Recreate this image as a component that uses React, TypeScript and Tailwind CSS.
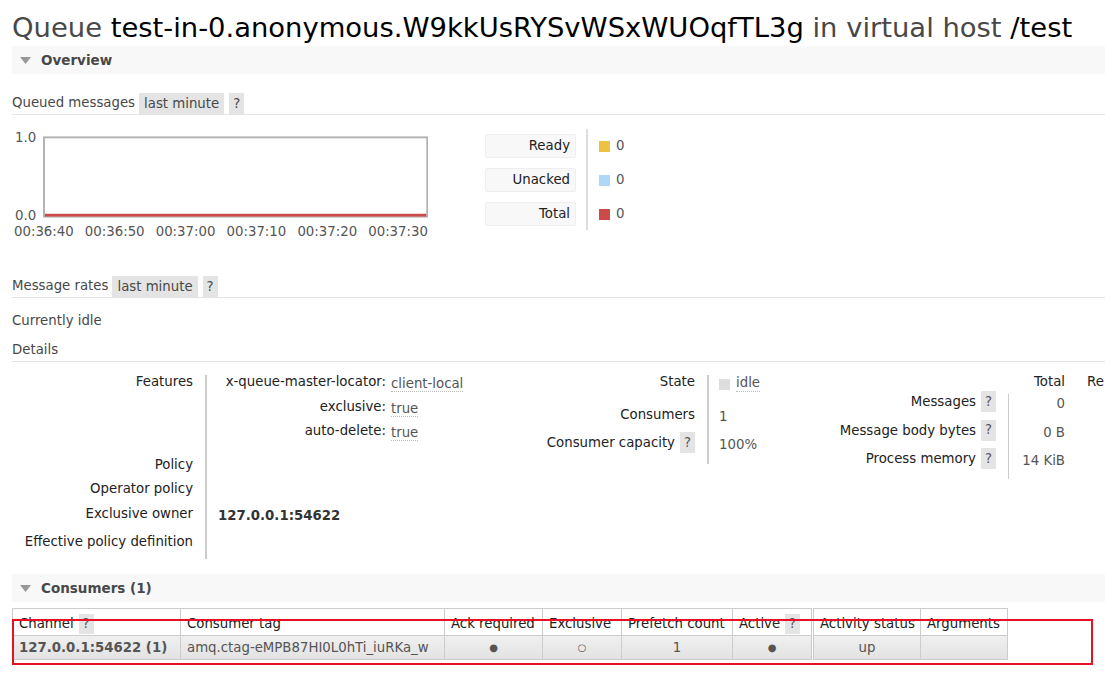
import React from "react";

const FONT = { fontFamily: '"DejaVu Sans", Verdana, sans-serif' };

function Help({ h = "h-[21px]" }: { h?: string }) {
  return (
    <span className={`inline-flex ${h} w-[15px] items-center justify-center bg-[#e4e4e4] text-[#555]`}>
      ?
    </span>
  );
}

function SectionBar({ title }: { title: string }) {
  return (
    <div className="flex h-[28px] items-center bg-[#f8f8f8] pl-[8px]">
      <svg width="11" height="7" viewBox="0 0 11 7" className="mr-[10px]">
        <polygon points="0,0 11,0 5.5,7" fill="#999" />
      </svg>
      <span className="text-[13.5px] font-bold text-[#484848]">{title}</span>
    </div>
  );
}

function SubHead({ label, badge }: { label: string; badge?: boolean }) {
  return (
    <div className="flex h-[22px] items-end border-b border-[#e4e4e4] text-[#484848]">
      <span className="mr-[4px] leading-[22px]">{label}</span>
      {badge && (
        <>
          <span className="mr-[5px] bg-[#e4e4e4] px-[5px] leading-[21px]">last minute</span>
          <span className="bg-[#e4e4e4] px-[4px] leading-[21px]">?</span>
        </>
      )}
    </div>
  );
}

function Chart() {
  const times = ["00:36:40", "00:36:50", "00:37:00", "00:37:10", "00:37:20", "00:37:30"];
  return (
    <div className="flex w-[416px] flex-col text-[#555]">
      <div className="flex">
        <div className="flex h-[94px] w-[31px] flex-col justify-between pl-[3px] leading-[16px]">
          <span>1.0</span>
          <span>0.0</span>
        </div>
        <svg width="389" height="82" viewBox="0 0 389 82" className="mt-[6px]">
          <rect x="1" y="1" width="387" height="80" fill="#fff" stroke="#b3b3b3" strokeWidth="2" />
          <line x1="2" y1="79.5" x2="387" y2="79.5" stroke="#cb4b4b" strokeWidth="3" />
        </svg>
      </div>
      <div className="flex justify-between pl-[2px] leading-[16px]">
        {times.map((t) => (
          <span key={t}>{t}</span>
        ))}
      </div>
    </div>
  );
}

function Legend() {
  const items = [
    { label: "Ready", color: "bg-[#edc240]" },
    { label: "Unacked", color: "bg-[#afd8f8]" },
    { label: "Total", color: "bg-[#cb4b4b]" },
  ];
  return (
    <div className="flex">
      <div className="flex flex-col gap-[10px] pt-[5px] pr-[10px]">
        {items.map((i) => (
          <div
            key={i.label}
            className="h-[24px] w-[91px] rounded-[2px] border border-[#eee] bg-[#f8f8f8] pr-[5px] text-right leading-[22px] text-[#222]"
          >
            {i.label}
          </div>
        ))}
      </div>
      <div className="flex h-[101px] flex-col gap-[10px] border-l-[2px] border-[#ddd] pt-[5px] pl-[11px]">
        {items.map((i) => (
          <div key={i.label} className="flex h-[24px] items-center gap-[6px] text-[#555]">
            <span className={`h-[11px] w-[11px] ${i.color}`} />
            <span>0</span>
          </div>
        ))}
      </div>
    </div>
  );
}

function DottedVal({ children }: { children: React.ReactNode }) {
  return (
    <span className="whitespace-nowrap border-b border-dotted border-[#bbb] leading-[17px] text-[#555]">
      {children}
    </span>
  );
}

function VLine({ h }: { h: string }) {
  return <div className={`mt-[3px] w-[2px] shrink-0 bg-[#ccc] ${h}`} />;
}

function DetailsLeft() {
  const labels: { label: string; h: string }[] = [
    { label: "Features", h: "h-[83px]" },
    { label: "Policy", h: "h-[24px]" },
    { label: "Operator policy", h: "h-[25px]" },
    { label: "Exclusive owner", h: "h-[28px]" },
    { label: "Effective policy definition", h: "h-[20px]" },
  ];
  return (
    <div className="flex w-[458px] leading-[20px]">
      <div className="flex w-[193px] shrink-0 flex-col pr-[12px] text-right text-[#222] whitespace-nowrap">
        {labels.map((l) => (
          <div key={l.label} className={l.h}>
            {l.label}
          </div>
        ))}
      </div>
      <VLine h="h-[184px]" />
      <div className="flex flex-col pl-[11px]">
        <div className="h-[83px]">
          {[
            ["x-queue-master-locator:", "client-local"],
            ["exclusive:", "true"],
            ["auto-delete:", "true"],
          ].map(([k, v]) => (
            <div key={k} className="flex h-[24.5px]">
              <span className="w-[173px] shrink-0 pr-[5px] text-right text-[#222] whitespace-nowrap">{k}</span>
              <span className="pt-[2px]">
                <DottedVal>{v}</DottedVal>
              </span>
            </div>
          ))}
        </div>
        <div className="h-[24px]" />
        <div className="h-[25px]" />
        <div className="h-[28px] pt-[2px] font-bold text-[#333]">127.0.0.1:54622</div>
      </div>
    </div>
  );
}

function DetailsMiddle() {
  return (
    <div className="flex w-[310px] leading-[20px]">
      <div className="flex w-[237px] shrink-0 flex-col items-end pr-[12px] text-[#222]">
        <div className="h-[33px]">State</div>
        <div className="h-[28px]">Consumers</div>
        <div className="flex h-[28px] items-start gap-[5px]">
          <span>Consumer capacity</span>
          <span className="-mt-[1px]">
            <Help />
          </span>
        </div>
      </div>
      <VLine h="h-[89px]" />
      <div className="flex flex-col pl-[10px] pt-[2px] text-[#555]">
        <div className="flex h-[33px] items-start gap-[6px]">
          <span className="mt-[5px] h-[11px] w-[11px] bg-[#ddd]" />
          <DottedVal>idle</DottedVal>
        </div>
        <div className="h-[28px]">1</div>
        <div className="h-[28px]">100%</div>
      </div>
    </div>
  );
}

function DetailsRight() {
  const rows = [
    ["Messages", "0"],
    ["Message body bytes", "0 B"],
    ["Process memory", "14 KiB"],
  ];
  return (
    <div className="flex flex-col leading-[20px]">
      <div className="flex h-[20px]">
        <span className="w-[285px] text-right text-[#222]">Total</span>
        <span className="pl-[22px] text-[#222]">Re</span>
      </div>
      <div className="flex">
        <div className="flex w-[228px] shrink-0 flex-col items-end pr-[12px] text-[#222]">
          {rows.map(([l]) => (
            <div key={l} className="flex h-[28.5px] items-start gap-[5px]">
              <span>{l}</span>
              <span className="-mt-[1px]">
                <Help />
              </span>
            </div>
          ))}
        </div>
        <div className="mt-[2px] h-[85px] w-[1px] bg-[#ccc]" />
        <div className="flex w-[56px] flex-col items-end pt-[2px] text-[#555]">
          {rows.map(([l, v]) => (
            <div key={l} className="h-[28.5px] whitespace-nowrap">
              {v}
            </div>
          ))}
        </div>
      </div>
    </div>
  );
}

function ConsumersTable() {
  const cols = [
    { h: "Channel", w: "w-[168px]", help: true },
    { h: "Consumer tag", w: "w-[264px]" },
    { h: "Ack required", w: "w-[98px]" },
    { h: "Exclusive", w: "w-[79px]" },
    { h: "Prefetch count", w: "w-[111px]" },
    { h: "Active", w: "w-[80px]", help: true },
    { h: "Activity status", w: "w-[108px]" },
    { h: "Arguments", w: "w-[87px]" },
  ];
  const vals = ["127.0.0.1:54622 (1)", "amq.ctag-eMPB87HI0L0hTi_iuRKa_w", "●", "○", "1", "●", "up", ""];
  return (
    <table className="w-[995px] table-fixed border-collapse">
      <thead>
        <tr>
          {cols.map((c, i) => (
            <th
              key={c.h}
              className={`${c.w} h-[27px] border border-[#ccc] px-[6px] pt-[3px] pb-0 text-left align-middle font-normal whitespace-nowrap text-[#222] ${i === 6 ? "border-l-[3px] [border-left-style:double]" : ""}`}
            >
              {c.help ? (
                <span className="flex items-center gap-[5px]">
                  <span>{c.h}</span>
                  <Help h="h-[20px]" />
                </span>
              ) : (
                c.h
              )}
            </th>
          ))}
        </tr>
      </thead>
      <tbody>
        <tr className="bg-gradient-to-b from-[#f0f0f0] to-[#e2e2e2]">
          {vals.map((v, i) => (
            <td
              key={i}
              className={`h-[24px] overflow-hidden border border-[#ccc] px-[6px] whitespace-nowrap text-[#555] ${i < 2 ? "text-left" : "text-center"} ${i === 0 ? "font-bold text-[#222]" : ""} ${i === 6 ? "border-l-[3px] [border-left-style:double]" : ""} ${v === "●" || v === "○" ? "text-[10px]" : ""}`}
            >
              {v}
            </td>
          ))}
        </tr>
      </tbody>
    </table>
  );
}

export default function App() {
  return (
    <div
      className="relative h-[673px] w-[1105px] overflow-hidden bg-white pl-[12px] text-[13.3px]"
      style={FONT}
    >
      <h1 className="h-[45px] pt-[13px] text-[27.4px] leading-[30px] font-normal whitespace-nowrap text-[#484848]">
        Queue <span className="text-black">test-in-0.anonymous.W9kkUsRYSvWSxWUOqfTL3g</span> in virtual host{" "}
        <span className="text-black">/test</span>
      </h1>
      <div className="mt-[1px]">
        <SectionBar title="Overview" />
      </div>

      <div className="mt-[19px]">
        <SubHead label="Queued messages" badge />
      </div>

      <div className="mt-[15px] flex h-[110px]">
        <Chart />
        <div className="ml-[57px] -mt-[1px]">
          <Legend />
        </div>
      </div>

      <div className="mt-[36px]">
        <SubHead label="Message rates" badge />
      </div>
      <div className="mt-[15px] h-[16px] leading-[16px] text-[#484848]">Currently idle</div>
      <div className="mt-[11px]">
        <SubHead label="Details" />
      </div>

      <div className="mt-[10px] flex h-[202px]">
        <DetailsLeft />
        <DetailsMiddle />
        <DetailsRight />
      </div>

      <SectionBar title="Consumers (1)" />
      <div className="mt-[6px]">
        <ConsumersTable />
      </div>

      <div className="pointer-events-none absolute left-[12px] top-[619px] h-[46px] w-[1081px] border-[2px] border-[#e81123]" />
    </div>
  );
}
